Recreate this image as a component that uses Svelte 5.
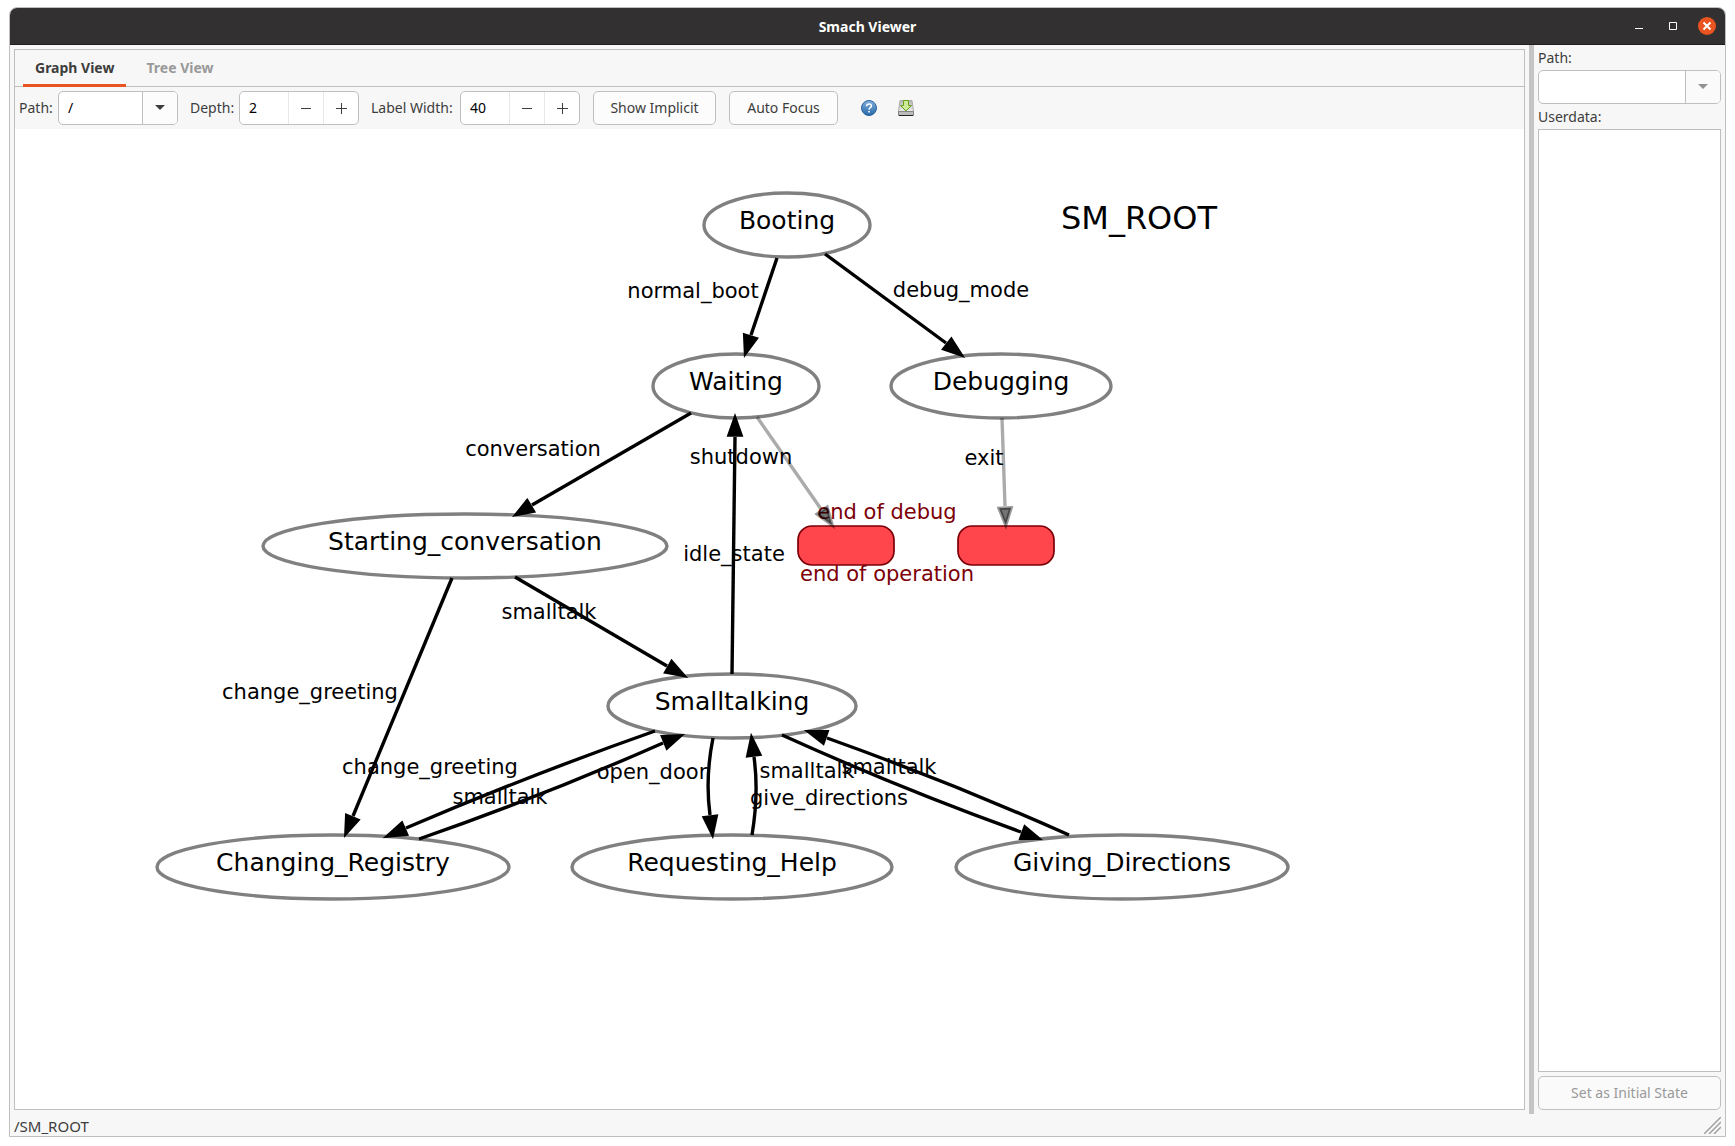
<script>
  let path = $state('/');
  let depth = $state(2);
  let labelWidth = $state(40);
  let statePath = $state('');
  let userdata = $state('');

  const nodes = [
    { name: 'Booting', x: 787, y: 225, rx: 83 },
    { name: 'Waiting', x: 736, y: 386, rx: 83 },
    { name: 'Debugging', x: 1001, y: 386, rx: 110 },
    { name: 'Starting_conversation', x: 465, y: 546, rx: 202 },
    { name: 'Smalltalking', x: 732, y: 706, rx: 124 },
    { name: 'Changing_Registry', x: 333, y: 867, rx: 176 },
    { name: 'Requesting_Help', x: 732, y: 867, rx: 160 },
    { name: 'Giving_Directions', x: 1122, y: 867, rx: 166 },
  ];

  const outcomes = [
    { x: 798, y: 526 },
    { x: 958, y: 526 },
  ];

  // from: line start, via: curve control point, neck: arrowhead base, tip: arrowhead point
  const edges = [
    { from: [777, 258], neck: [751, 335], tip: [744, 358] },
    { from: [825, 254], neck: [946, 343], tip: [965, 358] },
    { from: [691, 413], neck: [532, 505], tip: [512, 517] },
    { from: [757, 417], neck: [821, 509], tip: [835, 529], dim: true },
    { from: [1002, 418], neck: [1005, 506], tip: [1006, 530], dim: true },
    { from: [732, 674], neck: [735, 437], tip: [735, 413] },
    { from: [515, 577], neck: [667, 666], tip: [688, 678] },
    { from: [452, 578], neck: [353, 816], tip: [344, 838] },
    { from: [655, 731], via: [530, 775], neck: [406, 828], tip: [383, 838] },
    { from: [419, 839], via: [543, 796], neck: [663, 743], tip: [685, 734] },
    { from: [713, 738], via: [705, 778], neck: [710, 815], tip: [713, 839] },
    { from: [752, 835], via: [759, 793], neck: [754, 757], tip: [751, 733] },
    { from: [782, 735], via: [899, 788], neck: [1021, 832], tip: [1043, 840] },
    { from: [1069, 835], via: [950, 782], neck: [827, 738], tip: [804, 730] },
  ];

  const labels = [
    { text: 'normal_boot', x: 693, y: 298 },
    { text: 'debug_mode', x: 961, y: 297 },
    { text: 'conversation', x: 533, y: 456 },
    { text: 'shutdown', x: 741, y: 464 },
    { text: 'exit', x: 984, y: 465 },
    { text: 'idle_state', x: 734, y: 561 },
    { text: 'smalltalk', x: 549, y: 619 },
    { text: 'change_greeting', x: 310, y: 699 },
    { text: 'change_greeting', x: 430, y: 774 },
    { text: 'smalltalk', x: 500, y: 804 },
    { text: 'open_door', x: 652, y: 779 },
    { text: 'smalltalk', x: 807, y: 778 },
    { text: 'smalltalk', x: 889, y: 774 },
    { text: 'give_directions', x: 829, y: 805 },
    { text: 'end of debug', x: 887, y: 519, end: true },
    { text: 'end of operation', x: 887, y: 581, end: true },
  ];

  function line({ from, via, neck }) {
    return via ? `M${from}Q${via} ${neck}` : `M${from}L${neck}`;
  }

  function head({ neck, tip }) {
    const dx = tip[0] - neck[0];
    const dy = tip[1] - neck[1];
    const len = Math.hypot(dx, dy);
    const ux = dx / len;
    const uy = dy / len;
    const bx = neck[0] + ux * 2;
    const by = neck[1] + uy * 2;
    const px = tip[0] - ux * 5;
    const py = tip[1] - uy * 5;
    return `${bx - uy * 6},${by + ux * 6} ${px},${py} ${bx + uy * 6},${by - ux * 6}`;
  }
</script>

{#snippet minus()}
  <svg width="12" height="12" viewBox="0 0 12 12" aria-hidden="true"><path d="M1 6.5h10" /></svg>
{/snippet}
{#snippet plus()}
  <svg width="12" height="12" viewBox="0 0 12 12" aria-hidden="true"><path d="M1 6.5h11M6.5 1v11" /></svg>
{/snippet}
{#snippet arrow()}
  <svg width="10" height="6" viewBox="0 0 10 6" aria-hidden="true"><path class="solid" d="M0 0h10L5 5z" /></svg>
{/snippet}

<div class="window">
  <header>
    <h1>Smach Viewer</h1>
    <div class="controls">
      <button aria-label="Minimize"><svg width="18" height="18" viewBox="0 0 18 18"><path d="M5 11.5h8" /></svg></button>
      <button aria-label="Maximize"><svg width="18" height="18" viewBox="0 0 18 18"><path d="M5.500 5.500h7v7h-7z" /></svg></button>
      <button class="close" aria-label="Close"><svg width="18" height="18" viewBox="0 0 18 18"><path d="M5.500 5.500l7 7m0-7l-7 7" stroke-width="2" /></svg></button>
    </div>
  </header>

  <main>
    <section class="graph">
      <div class="tabs" role="tablist">
        <button role="tab" aria-selected="true">Graph View</button>
        <button role="tab" aria-selected="false">Tree View</button>
      </div>
      <div class="toolbar">
        <label class="w-path" for="path">Path:</label>
        <div class="field">
          <input id="path" bind:value={path} />
          <button class="drop" aria-label="Choose path">{@render arrow()}</button>
        </div>
        <label class="w-depth" for="depth">Depth:</label>
        <div class="field spin">
          <input id="depth" bind:value={depth} />
          <button aria-label="Less depth" onclick={() => depth--}>{@render minus()}</button>
          <button aria-label="More depth" onclick={() => depth++}>{@render plus()}</button>
        </div>
        <label class="w-label" for="label-width">Label Width:</label>
        <div class="field spin">
          <input id="label-width" bind:value={labelWidth} />
          <button aria-label="Narrower labels" onclick={() => labelWidth--}>{@render minus()}</button>
          <button aria-label="Wider labels" onclick={() => labelWidth++}>{@render plus()}</button>
        </div>
        <button class="push implicit">Show Implicit</button>
        <button class="push focus">Auto Focus</button>
        <button class="tool help" aria-label="Help">
          <svg width="16" height="16" viewBox="0 0 16 16">
            <defs>
              <linearGradient id="blue" x2="0" y2="1"><stop stop-color="#83b0dc" /><stop offset="1" stop-color="#2568a8" /></linearGradient>
            </defs>
            <circle cx="8" cy="8" r="7.500" fill="url(#blue)" stroke="#2b65a0" />
            <path d="M5.700 6.200C5.700 3.200 10.400 3.200 10.400 5.900C10.400 7.700 8 7.700 8 9.800" fill="none" stroke="#fff" stroke-width="1.500" />
            <path d="M7.200 11h1.700v1.600H7.200z" fill="#fff" />
          </svg>
        </button>
        <button class="tool save" aria-label="Save">
          <svg width="16" height="16" viewBox="0 0 16 16">
            <defs>
              <linearGradient id="metal" x2="0" y2="1"><stop stop-color="#b5b5b5" /><stop offset="1" stop-color="#ececec" /></linearGradient>
            </defs>
            <path d="M2 .5h12l1.500 11H.5z" fill="url(#metal)" stroke="#aaa" />
            <path d="M.5 11.500h15v4H.5z" fill="#bbb" stroke="#888" />
            <path d="M1 15.500h14" stroke="#222" />
            <path d="M5.500 .5h5v5h3L8 11L2.500 5.500h3z" fill="#cdea98" stroke="#67a01c" />
          </svg>
        </button>
      </div>

      <div class="canvas">
        <svg viewBox="15 129 1509 980" role="img" aria-label="State machine graph">
          {#each nodes as n}
            <ellipse cx={n.x} cy={n.y} rx={n.rx} ry="32" />
            <text class="node" x={n.x} y={n.y + 4}>{n.name}</text>
          {/each}
          {#each outcomes as o}
            <rect x={o.x} y={o.y} width="96" height="39" rx="14" />
          {/each}
          {#each labels as l}
            <text class="edge-label" class:end={l.end} x={l.x} y={l.y}>{l.text}</text>
          {/each}
          {#each edges as e}
            <g class:dim={e.dim}>
              <path class="edge" d={line(e)} />
              <polygon points={head(e)} />
            </g>
          {/each}
          <text class="title" x="1139" y="229">SM_ROOT</text>
        </svg>
      </div>
    </section>

    <div class="sash"></div>

    <aside>
      <label for="state-path">Path:</label>
      <div class="field">
        <input id="state-path" bind:value={statePath} />
        <button class="drop off" aria-label="Choose state" disabled>{@render arrow()}</button>
      </div>
      <label for="userdata">Userdata:</label>
      <textarea id="userdata" bind:value={userdata}></textarea>
      <button class="push" disabled>Set as Initial State</button>
    </aside>
  </main>

  <footer>
    <span>/SM_ROOT</span>
    <svg width="17" height="17" viewBox="0 0 17 17" aria-hidden="true"><path d="M0 17L17 0M5 17L17 5M10 17l7-7" /></svg>
  </footer>
</div>

<style>
  :global(body) {
    background: #fff;
  }
  * {
    box-sizing: border-box;
  }
  .window {
    display: flex;
    flex-direction: column;
    height: calc(100vh - 16px);
    min-height: 480px;
    margin: 7px 9px 9px;
    overflow: hidden;
    border: 1px solid #bfbfbf;
    border-radius: 8px 8px 0 0;
    background: #f7f7f7;
    color: #3d3d3d;
    font: 14px/20px 'Noto Sans', sans-serif;
  }
  button,
  input,
  textarea {
    margin: 0;
    padding: 0;
    border: 0;
    outline: 0;
    background: none;
    color: inherit;
    font: inherit;
  }
  button svg {
    display: block;
    margin: auto;
  }
  header {
    display: grid;
    grid-template-columns: 1fr auto 1fr;
    align-items: center;
    height: 37px;
    flex: none;
    border-bottom: 1px solid #1f1d1d;
    background: #323030;
    color: #fff;
  }
  h1 {
    grid-column: 2;
    margin: 0;
    padding-top: 2px;
    font-size: 14px;
    font-weight: 700;
  }
  .controls {
    display: flex;
    justify-content: flex-end;
    gap: 16px;
    padding-right: 9px;
  }
  .controls button {
    width: 18px;
    height: 18px;
    border-radius: 9px;
  }
  .controls path {
    fill: none;
    stroke: #fff;
  }
  .controls .close {
    background: #e95420;
  }
  main {
    display: flex;
    flex: 1;
    min-height: 0;
  }
  .graph {
    display: flex;
    flex: 1;
    flex-direction: column;
    min-width: 0;
    margin: 4px;
    border: 1px solid #bfbfbf;
  }
  .tabs {
    display: flex;
    flex: none;
    gap: 8px;
    height: 37px;
    padding-left: 8px;
    border-bottom: 1px solid #bfbfbf;
  }
  .tabs button {
    height: 37px;
    padding: 2px 12px 0;
    border-bottom: 3px solid transparent;
    color: #999;
    font-weight: 700;
  }
  .tabs button[aria-selected='true'] {
    border-color: #e95420;
    color: #3d3d3d;
  }
  .toolbar {
    display: flex;
    flex: none;
    align-items: center;
    height: 42px;
    padding-left: 4px;
  }
  .w-path {
    width: 39px;
  }
  .w-depth {
    width: 61px;
    padding-left: 12px;
  }
  .w-label {
    width: 101px;
    padding-left: 12px;
  }
  label {
    white-space: nowrap;
  }
  .field {
    display: flex;
    width: 120px;
    height: 34px;
    flex: none;
    overflow: hidden;
    border: 1px solid #bfbfbf;
    border-radius: 5px;
    background: #fff;
  }
  .field input {
    flex: 1;
    width: 0;
    padding-left: 9px;
    color: #000;
  }
  .field button {
    width: 35px;
    border-left: 1px solid #e8e8e8;
  }
  .field .drop {
    border-color: #bfbfbf;
    background: #fcfcfc;
  }
  .field path {
    stroke: #3d3d3d;
  }
  .field .solid {
    fill: #3d3d3d;
    stroke: none;
  }
  .field .off .solid {
    fill: #929292;
  }
  .field .off {
    background: #fafafa;
  }
  .push {
    height: 34px;
    border: 1px solid #bfbfbf;
    border-radius: 5px;
    background: #fcfcfc;
    white-space: nowrap;
  }
  .push:disabled {
    background: #fafafa;
    color: #999;
  }
  .implicit {
    width: 123px;
    margin-left: 13px;
  }
  .focus {
    width: 109px;
    margin-left: 13px;
  }
  .help {
    margin-left: 23px;
  }
  .save {
    margin-left: 21px;
  }
  .canvas {
    flex: 1;
    min-height: 0;
    background: #fff;
  }
  .canvas svg {
    display: block;
    width: 100%;
    height: 100%;
  }
  ellipse {
    fill: none;
    stroke: #808080;
    stroke-width: 3.4;
  }
  rect {
    fill: #ff464d;
    stroke: #7c0006;
    stroke-width: 1.7;
  }
  text {
    fill: #000;
    font-family: 'DejaVu Sans', sans-serif;
    text-anchor: middle;
  }
  .node {
    font-size: 25px;
  }
  .edge-label {
    font-size: 21px;
  }
  .end {
    fill: #7c0006;
  }
  .title {
    font-size: 32px;
  }
  .edge {
    fill: none;
    stroke: #000;
    stroke-width: 3.4;
  }
  polygon {
    fill: #000;
    stroke: #000;
    stroke-width: 3.4;
    stroke-miterlimit: 10;
  }
  .dim .edge {
    stroke-opacity: 0.33;
  }
  .dim polygon {
    fill-opacity: 0.55;
    stroke-opacity: 0.4;
  }
  .sash {
    width: 5px;
    flex: none;
    background: #c4c4c4;
  }
  aside {
    display: flex;
    flex-direction: column;
    width: 191px;
    flex: none;
    padding: 3px 4px 4px;
  }
  aside label {
    height: 22px;
  }
  aside .field {
    width: 100%;
    margin-bottom: 3px;
  }
  textarea {
    flex: 1;
    border: 1px solid #bfbfbf;
    background: #fff;
    resize: none;
  }
  aside .push {
    flex: none;
    margin-top: 4px;
  }
  footer {
    display: flex;
    flex: none;
    align-items: center;
    justify-content: space-between;
    height: 22px;
    padding: 0 4px;
    font-size: 15px;
  }
  footer span {
    padding-top: 1px;
  }
  footer path {
    stroke: #a0a0a0;
    stroke-width: 1.500;
  }
</style>
